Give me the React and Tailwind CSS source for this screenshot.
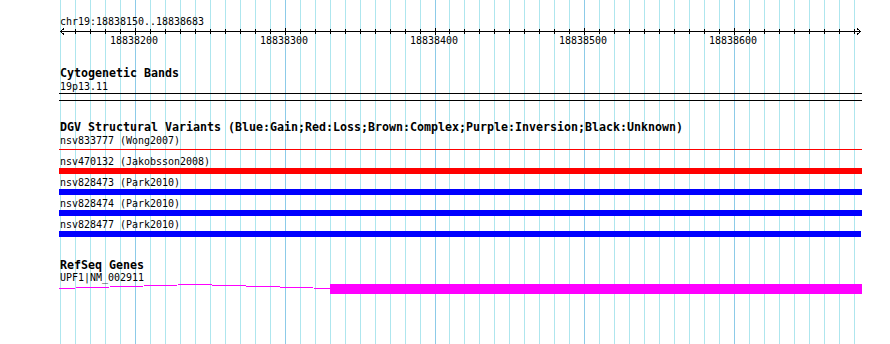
import React from 'react';

// grid: 10bp steps, 1.498 px per bp, starting at x=60
const gridLines = Array.from({ length: 54 }, (_, k) => ({
  x: Math.round(60 + k * 14.98),
  major: k % 10 === 5,
}));

const majorLabels = gridLines
  .map((g, k) => ({ ...g, label: String(18838150 + k * 10) }))
  .filter((g) => g.major);

const variants = [
  { name: 'nsv833777 (Wong2007)', color: 'red', thin: true },
  { name: 'nsv470132 (Jakobsson2008)', color: 'red' },
  { name: 'nsv828473 (Park2010)', color: 'blue' },
  { name: 'nsv828474 (Park2010)', color: 'blue' },
  { name: 'nsv828477 (Park2010)', color: 'blue', short: true },
];

const Label = ({ children }) => (
  <div className="ml-px h-[13px] whitespace-nowrap text-[9.97px] leading-[13px] text-black">
    {children}
  </div>
);

const TrackTitle = ({ children }) => (
  <div className="ml-px h-[14px] whitespace-nowrap text-[11.63px] leading-[14px] font-bold text-black">
    {children}
  </div>
);

const Ruler = () => (
  <div className="relative h-[19px] w-[803px]">
    <svg className="absolute left-0 top-0" width="803" height="8" shapeRendering="crispEdges">
      <line x1="1" y1="3.5" x2="802" y2="3.5" stroke="#000" />
      {gridLines.slice(1).map((g) => (
        <line
          key={g.x}
          x1={g.x - 59 + 0.5}
          x2={g.x - 59 + 0.5}
          y1={g.major ? 0 : 1}
          y2={g.major ? 7 : 6}
          stroke="#000"
        />
      ))}
      <path d="M5 0.5 L1.5 3.5 L5 6.5" fill="none" stroke="#000" />
      <path d="M798 0.5 L801.5 3.5 L798 6.5" fill="none" stroke="#000" />
    </svg>
    {majorLabels.map((g) => (
      <span
        key={g.label}
        className="absolute top-[6px] whitespace-nowrap text-[9.97px] leading-[13px] text-black"
        style={{ left: g.x - 59 - 25 }}
      >
        {g.label}
      </span>
    ))}
  </div>
);

const VariantRow = ({ v }) => (
  <div className="mb-[2px]">
    <Label>{v.name}</Label>
    {v.thin ? (
      <div className="h-[6px] pt-[2px]">
        <div className="h-px w-[803px] bg-[#ff0000]" />
      </div>
    ) : (
      <div
        className={`h-[6px] ${v.short ? 'w-[802px]' : 'w-[803px]'} ${
          v.color === 'red' ? 'bg-[#ff0000]' : 'bg-[#0000ff]'
        }`}
      />
    )}
  </div>
);

export default function App() {
  return (
    <div className="relative h-[344px] w-[890px] overflow-hidden bg-white font-['DejaVu_Sans_Mono','Liberation_Mono',monospace]">
      {/* background grid */}
      <svg className="absolute inset-0" width="890" height="344" shapeRendering="crispEdges">
        {gridLines.map((g) => (
          <line
            key={g.x}
            x1={g.x + 0.5}
            x2={g.x + 0.5}
            y1="0"
            y2="344"
            stroke={g.major ? '#8ccbe8' : '#aee6ee'}
          />
        ))}
      </svg>

      <div className="relative flex flex-col pl-[59px] pt-[15px]">
        {/* ruler */}
        <Label>chr19:18838150..18838683</Label>
        <Ruler />

        {/* cytogenetic bands */}
        <div className="mt-[19px]">
          <TrackTitle>Cytogenetic Bands</TrackTitle>
          <Label>19p13.11</Label>
          <div className="h-[8px] w-[803px] border-y border-black" />
        </div>

        {/* DGV */}
        <div className="mt-[19px]">
          <TrackTitle>
            DGV Structural Variants (Blue:Gain;Red:Loss;Brown:Complex;Purple:Inversion;Black:Unknown)
          </TrackTitle>
          {variants.map((v) => (
            <VariantRow key={v.name} v={v} />
          ))}
        </div>

        {/* RefSeq */}
        <div className="mt-[19px]">
          <TrackTitle>RefSeq Genes</TrackTitle>
          <div className="ml-px h-[12px] whitespace-nowrap text-[9.97px] leading-[12px] text-black">
            UPF1|NM_002911
          </div>
          <svg width="803" height="10" shapeRendering="crispEdges">
            <polyline points="0,4.5 136,0.5 271,4.5" fill="none" stroke="#ff00ff" />
            <rect x="271" y="0" width="532" height="10" fill="#ff00ff" />
          </svg>
        </div>
      </div>
    </div>
  );
}
